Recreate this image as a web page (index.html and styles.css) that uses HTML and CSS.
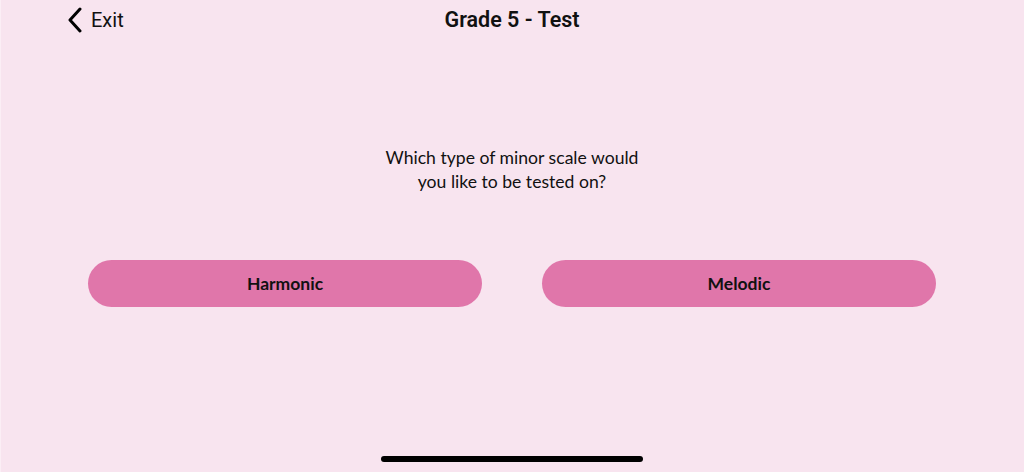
FILE: index.html
```html
<!DOCTYPE html>
<html>
<head>
<meta charset="utf-8">
<link rel="stylesheet" href="styles.css">
</head>
<body>
<div class="screen">
  <header class="nav">
    <div class="back">
      <svg class="chev" width="16" height="26" viewBox="0 0 16 26"><path d="M13 2 L3 13 L13 24" fill="none" stroke="#000" stroke-width="3" stroke-linecap="round" stroke-linejoin="round"/></svg>
      <span class="exit">Exit</span>
    </div>
    <div class="title">Grade 5 - Test</div>
  </header>
  <main class="content">
    <p class="question">Which type of minor scale would<br>you like to be tested on?</p>
    <div class="choices">
      <button class="choice">Harmonic</button>
      <button class="choice">Melodic</button>
    </div>
  </main>
  <div class="home-bar"></div>
</div>
</body>
</html>
```
FILE: styles.css
```css
html, body {
  margin: 0;
  padding: 0;
  background: #f8e4ef;
}
.screen {
  width: 1024px;
  height: 472px;
  box-sizing: border-box;
  box-shadow: inset 1px 0 0 #fbeef5;
  background: #f8e4ef;
  display: flex;
  flex-direction: column;
  align-items: center;
  font-family: Lato, "Noto Sans", sans-serif;
  color: #000;
  position: relative;
}
.nav {
  width: 100%;
  height: 40px;
  position: relative;
  display: flex;
  align-items: center;
  justify-content: center;
}
.back {
  position: absolute;
  left: 67px;
  top: 7px;
  display: flex;
  align-items: center;
  gap: 8px;
}
.chev { display: block; }
.exit {
  font-family: Roboto, "Noto Sans", sans-serif;
  font-size: 20px;
  color: #111;
}
.title {
  font-family: Roboto, "Noto Sans", sans-serif;
  font-weight: 600;
  font-size: 21.5px;
  margin-top: -1px;
  color: #111;
}
.content {
  display: flex;
  flex-direction: column;
  align-items: center;
  width: 100%;
}
.question {
  margin: 106px 0 0 0;
  font-size: 17.6px;
  line-height: 24px;
  text-align: center;
  color: #111;
}
.choices {
  display: flex;
  gap: 60px;
  margin-top: 66px;
}
.choice {
  width: 394px;
  height: 47px;
  border: none;
  border-radius: 24px;
  background: #e076aa;
  font-family: Lato, "Noto Sans", sans-serif;
  font-weight: 700;
  font-size: 17.5px;
  color: #111;
  padding: 0;
}
.home-bar {
  position: absolute;
  left: 381px;
  top: 456px;
  width: 262px;
  height: 6px;
  border-radius: 3px;
  background: #000;
}
```
